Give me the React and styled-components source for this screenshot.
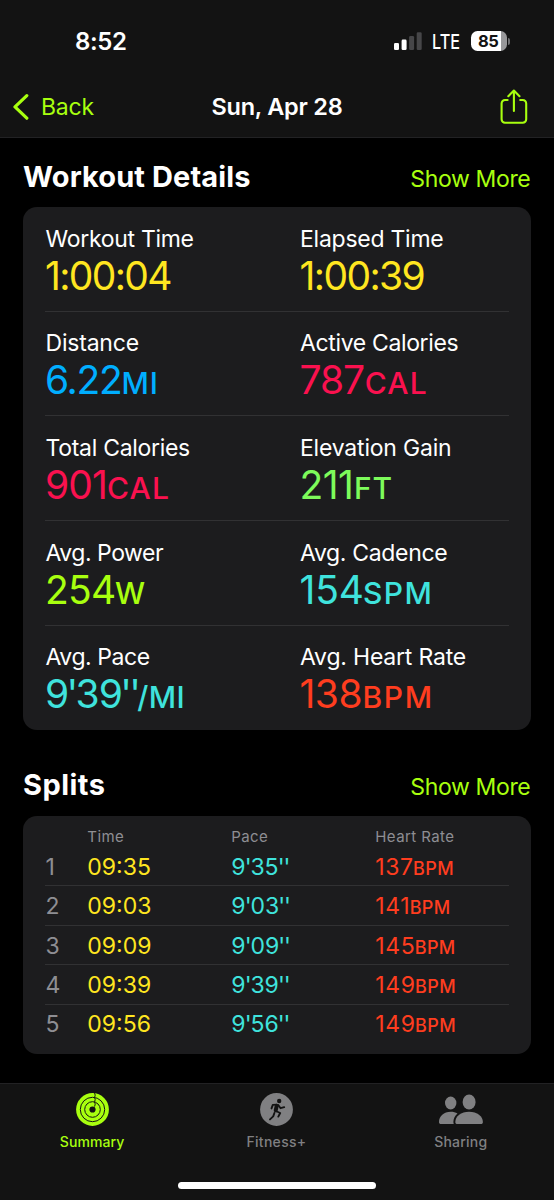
import React from 'react';
import styled, { createGlobalStyle } from 'styled-components';

const GlobalStyle = createGlobalStyle`
  * {
    box-sizing: border-box;
  }
  body {
    margin: 0;
    background-color: #000;
    font-family: Inter, 'Liberation Sans', sans-serif;
    color: #fff;
  }
`;

const lime = '#a8ff0f';
const yellow = '#ffe620';
const blue = '#00aeff';
const pink = '#fa114f';
const green = '#7dfb5b';
const cyan = '#3fe3dd';
const red = '#ff3d1f';

const PageWrapper = styled.div`
  display: flex;
  flex-direction: column;
  width: 554px;
  height: 1200px;
  overflow: hidden;
  background-color: #000;
`;

const Header = styled.header`
  height: 138px;
  background-color: #131313;
  border-bottom: 1px solid #222224;
`;

const StatusBar = styled.div`
  display: flex;
  align-items: center;
  justify-content: space-between;
  height: 82px;
  padding: 0 44px 0 75px;
`;

const Clock = styled.span`
  font-size: 24px;
  font-weight: 600;
  letter-spacing: -0.4px;
`;

const StatusIcons = styled.div`
  display: flex;
  align-items: center;
`;

const Network = styled.span`
  width: 30px;
  margin: 2px 0 0 9.7px;
  font-size: 20px;
  font-weight: 500;
  line-height: 20px;
  transform: scaleX(0.81);
  transform-origin: left center;
`;

const Battery = styled.div`
  display: flex;
  align-items: center;
  gap: 1px;
  margin-left: 9.3px;
`;

const BatteryBody = styled.div`
  width: 36px;
  height: 20px;
  padding-left: 7px;
  border-radius: 6.5px;
  background: linear-gradient(to right, #fff 30px, #98989a 30px);
  color: #131313;
  font-size: 16.5px;
  font-weight: 700;
  line-height: 21px;
  letter-spacing: -0.4px;
`;

const BatteryCap = styled.div`
  width: 2px;
  height: 7px;
  border-radius: 0 3px 3px 0;
  background-color: #707072;
`;

const NavBar = styled.nav`
  display: grid;
  grid-template-columns: 1fr auto 1fr;
  align-items: center;
  height: 50px;
  padding: 0 26px 0 13px;
`;

const BackButton = styled.button`
  display: flex;
  align-items: center;
  gap: 12px;
  padding: 0;
  border: 0;
  background: none;
  color: ${lime};
  font: 400 23px/30px Inter, sans-serif;
  letter-spacing: -0.2px;
`;

const NavTitle = styled.h1`
  margin: 0 0 0 13px;
  font-size: 23.5px;
  font-weight: 600;
  line-height: 30px;
  letter-spacing: -0.25px;
`;

const ShareButton = styled.button`
  display: flex;
  justify-self: end;
  padding: 0 0 1px;
  border: 0;
  background: none;
`;

const Content = styled.main`
  display: flex;
  flex-direction: column;
  flex: 1;
  padding: 0 23px;
`;

const SectionHeader = styled.div`
  display: flex;
  justify-content: space-between;
  height: ${(props) => props.$height}px;
  padding-top: ${(props) => props.$top}px;
`;

const SectionTitle = styled.h2`
  margin: 0;
  font-size: 29px;
  font-weight: 700;
  line-height: 36px;
  letter-spacing: ${(props) => props.$track}px;
`;

const ShowMore = styled.a`
  margin: 2.3px 0.6px 0 0;
  color: ${lime};
  font-size: 23px;
  line-height: 36px;
  letter-spacing: -0.35px;
`;

const Card = styled.section`
  border-radius: 14px;
  background-color: #1c1c1e;
`;

const MetricsCard = styled(Card)`
  display: grid;
  grid-template-rows: repeat(5, 1fr);
  height: 523px;
  padding: 0 22px;
`;

const MetricRow = styled.div`
  display: grid;
  grid-template-columns: 254.5px 1fr;
  padding-top: 16.6px;
  border-bottom: 1px solid #313133;

  &:last-child {
    border-bottom-color: transparent;
  }
`;

const MetricLabel = styled.div`
  padding-left: 0.5px;
  font-size: 23px;
  line-height: 30px;
  letter-spacing: ${(props) => props.$track}px;
  white-space: nowrap;
`;

const MetricValue = styled.div`
  color: ${(props) => props.$color};
  font-size: 39px;
  line-height: 43.8px;
  letter-spacing: ${(props) => props.$track}px;
  white-space: nowrap;
`;

const Unit = styled.span`
  margin-left: ${(props) => props.$shift || 0}px;
  font-size: 30px;
  font-weight: 500;
  line-height: 1;
  letter-spacing: ${(props) => props.$track}px;
`;

/* minute and second marks sit closer to the digits than the font sets them */
const Tick = styled.span`
  margin-left: -0.046em;
  letter-spacing: -0.07em;
`;

const SplitsCard = styled(Card)`
  height: 238.6px;
  padding: 5.8px 22px 0;
`;

const SplitRow = styled.div`
  display: grid;
  grid-template-columns: 42.3px 144px 144px 1fr;
  align-items: center;
  height: 39.4px;
  padding-top: 1.2px;
  border-bottom: 1px solid #313133;
  font-size: 23px;
  line-height: 30px;

  &:last-child {
    border-bottom-color: transparent;
  }
`;

const SplitHead = styled(SplitRow)`
  height: 25.6px;
  padding-top: 5.2px;
  border-bottom: 0;
  color: #8e8e93;
  font-size: 15px;
  line-height: 20px;
  letter-spacing: 0.4px;
`;

const SplitIndex = styled.span`
  padding-left: 0.5px;
  color: #8e8e93;
`;

const SplitCell = styled.span`
  color: ${(props) => props.$color};
  letter-spacing: ${(props) => props.$track || 0}px;
`;

const SplitTick = styled(Tick)`
  margin-left: -0.04em;
  letter-spacing: -0.05em;
`;

const SplitUnit = styled.span`
  margin-left: -0.6px;
  font-size: 18px;
  font-weight: 500;
  line-height: 1;
  letter-spacing: 0.4px;
`;

const TabBar = styled.footer`
  height: 117.5px;
  background-color: #131313;
  border-top: 1px solid #222224;
`;

const Tabs = styled.div`
  display: grid;
  grid-template-columns: repeat(3, 184.3px);
  height: 98px;
`;

const Tab = styled.div`
  display: flex;
  flex-direction: column;
  align-items: center;
  padding-top: 9px;
  color: ${(props) => (props.$active ? lime : '#808082')};
  font-size: 14px;
  font-weight: 500;
  line-height: 20px;
  letter-spacing: ${(props) => props.$track}px;

  svg {
    display: block;
    margin-bottom: 6px;
  }
`;

const HomeIndicator = styled.div`
  width: 198px;
  height: 7px;
  margin: 0 auto;
  border-radius: 4px;
  background-color: #fff;
`;

const metrics = [
  [
    { label: 'Workout Time', labelTrack: -0.3, value: '1:00:04', track: -1.65, color: yellow },
    { label: 'Elapsed Time', labelTrack: -0.25, value: '1:00:39', track: -1.6, color: yellow },
  ],
  [
    { label: 'Distance', labelTrack: -0.2, value: '6.22', track: -1.3, unit: 'MI', unitTrack: 0.9, color: blue },
    { label: 'Active Calories', labelTrack: -0.36, value: '787', track: -1.1, unit: 'CAL', unitTrack: 1.2, shift: 0.9, color: pink },
  ],
  [
    { label: 'Total Calories', labelTrack: -0.3, value: '901', track: -0.9, unit: 'CAL', unitTrack: 1.2, color: pink },
    { label: 'Elevation Gain', labelTrack: -0.2, value: '211', track: -0.6, unit: 'FT', unitTrack: 0.7, shift: 0.8, color: green },
  ],
  [
    { label: 'Avg. Power', labelTrack: -0.48, value: '254', track: -0.7, unit: 'W', unitTrack: 0, shift: -0.5, color: lime },
    { label: 'Avg. Cadence', labelTrack: -0.34, value: '154', track: -0.1, unit: 'SPM', unitTrack: 1.5, shift: -1, color: cyan },
  ],
  [
    { label: 'Avg. Pace', labelTrack: -0.45, value: "9'39''", track: -0.9, unit: '/MI', unitTrack: 0.5, shift: -1, color: cyan },
    { label: 'Avg. Heart Rate', labelTrack: -0.2, value: '138', track: -0.5, unit: 'BPM', unitTrack: 1.6, shift: 0.4, color: red },
  ],
];

const splits = [
  { time: '09:35', pace: "9'35''", heart: '137' },
  { time: '09:03', pace: "9'03''", heart: '141' },
  { time: '09:09', pace: "9'09''", heart: '145' },
  { time: '09:39', pace: "9'39''", heart: '149' },
  { time: '09:56', pace: "9'56''", heart: '149' },
];

const withTicks = (text, Mark) =>
  text.split(/('+)/).map((part, i) => (part.startsWith("'") ? <Mark key={i}>{part}</Mark> : part));

const SignalIcon = () => (
  <svg width="28" height="18" viewBox="0 0 28 18">
    <rect x="0" y="11" width="5" height="7" rx="1.3" fill="#fff" />
    <rect x="7.6" y="7.6" width="5" height="10.4" rx="1.3" fill="#fff" />
    <rect x="15.1" y="4" width="5" height="14" rx="1.3" fill="#464648" />
    <rect x="22.7" y="0.3" width="5" height="17.7" rx="1.3" fill="#464648" />
  </svg>
);

const ChevronIcon = () => (
  <svg width="16" height="28" viewBox="0 0 16 28" fill="none" stroke={lime} strokeWidth="3.2" strokeLinecap="round" strokeLinejoin="round">
    <path d="M13.8 2.6 2 13.9l11.8 11.3" />
  </svg>
);

const ShareIcon = () => (
  <svg width="28" height="36" viewBox="0 0 28 36" fill="none" stroke={lime} strokeWidth="2.1" strokeLinecap="round" strokeLinejoin="round">
    <path d="M7.6 11H5a3.4 3.4 0 0 0-3.4 3.4v15.9A3.4 3.4 0 0 0 5 33.7h17.8a3.4 3.4 0 0 0 3.4-3.4V14.4a3.4 3.4 0 0 0-3.4-3.4h-2.6" />
    <path d="M13.9 22V1.8M8.3 7.2l5.6-5.6 5.6 5.6" />
  </svg>
);

const RingsIcon = () => (
  <svg width="33" height="33" viewBox="0 0 33 33">
    <circle cx="16.5" cy="16.5" r="16.4" fill={lime} />
    <g fill="none" stroke="#131313" strokeWidth="1">
      <circle cx="16.5" cy="16.5" r="12.2" />
      <circle cx="16.5" cy="16.5" r="7.8" />
      <path d="M18.6 0q1.2 2.2 0 4.4M18.6 4.4q1.2 2.2 0 4.4M18.6 8.8q1.2 2.2 0 4.8" />
    </g>
    <circle cx="16.5" cy="16.5" r="3.1" fill="#131313" />
  </svg>
);

const RunnerIcon = () => (
  <svg width="33" height="33" viewBox="0 0 33 33">
    <circle cx="16.5" cy="16.5" r="16.4" fill="#808082" />
    <circle cx="19.2" cy="8" r="2.2" fill="#131313" />
    <g fill="none" stroke="#131313" strokeWidth="1.9" strokeLinecap="round" strokeLinejoin="round">
      <path d="M16.7 11.6 12.8 11.9 11.5 15.4" />
      <path d="M18.2 12 20.6 15.2 24.2 14.2" />
      <path d="M16.7 12.9 15.7 17.4" strokeWidth="4" />
      <path d="M15.8 18 20.2 20 18.3 23.6" />
      <path d="M14.4 20 13.2 23.4 10 26.4" />
    </g>
  </svg>
);

const PeopleIcon = () => (
  <svg width="44" height="33" viewBox="0 0 44 33" fill="#808082">
    <ellipse cx="11.7" cy="10" rx="5.7" ry="6.4" />
    <ellipse cx="30.1" cy="9" rx="6.5" ry="7.4" />
    <path d="M30.1 18.7c-8 0-13.8 4.7-13.8 10.2 0 1.4.7 2.1 2.2 2.1h23.2c1.5 0 2.2-.7 2.2-2.1 0-5.5-5.8-10.2-13.8-10.2z" />
    <path d="M11.7 18.7c2.6 0 4.9.6 6.8 1.7-2.5 2-4.1 5-4.1 8.4 0 .8.1 1.6.4 2.2H2.1C.7 31 0 30.3 0 28.9c0-5.5 4.9-10.2 11.7-10.2z" />
  </svg>
);

const Metric = ({ item }) => (
  <div>
    <MetricLabel $track={item.labelTrack}>{item.label}</MetricLabel>
    <MetricValue $color={item.color} $track={item.track}>
      {withTicks(item.value, Tick)}
      {item.unit && (
        <Unit $track={item.unitTrack} $shift={item.shift}>
          {item.unit}
        </Unit>
      )}
    </MetricValue>
  </div>
);

const App = () => (
  <PageWrapper>
    <GlobalStyle />
    <Header>
      <StatusBar>
        <Clock>8:52</Clock>
        <StatusIcons>
          <SignalIcon />
          <Network>LTE</Network>
          <Battery>
            <BatteryBody>85</BatteryBody>
            <BatteryCap />
          </Battery>
        </StatusIcons>
      </StatusBar>
      <NavBar>
        <BackButton>
          <ChevronIcon />
          Back
        </BackButton>
        <NavTitle>Sun, Apr 28</NavTitle>
        <ShareButton aria-label="Share">
          <ShareIcon />
        </ShareButton>
      </NavBar>
    </Header>
    <Content>
      <SectionHeader $height={69.3} $top={20.8}>
        <SectionTitle $track={0.1}>Workout Details</SectionTitle>
        <ShowMore>Show More</ShowMore>
      </SectionHeader>
      <MetricsCard>
        {metrics.map((row) => (
          <MetricRow key={row[0].label}>
            {row.map((item) => (
              <Metric key={item.label} item={item} />
            ))}
          </MetricRow>
        ))}
      </MetricsCard>
      <SectionHeader $height={85.4} $top={36.8}>
        <SectionTitle $track={0.45}>Splits</SectionTitle>
        <ShowMore>Show More</ShowMore>
      </SectionHeader>
      <SplitsCard>
        <SplitHead>
          <span />
          <span>Time</span>
          <span>Pace</span>
          <span>Heart Rate</span>
        </SplitHead>
        {splits.map((split, i) => (
          <SplitRow key={i}>
            <SplitIndex>{i + 1}</SplitIndex>
            <SplitCell $color={yellow}>{split.time}</SplitCell>
            <SplitCell $color={cyan}>{withTicks(split.pace, SplitTick)}</SplitCell>
            <SplitCell $color={red} $track={0.6}>
              {split.heart}
              <SplitUnit>BPM</SplitUnit>
            </SplitCell>
          </SplitRow>
        ))}
      </SplitsCard>
    </Content>
    <TabBar>
      <Tabs>
        <Tab $active $track={0.1}>
          <RingsIcon />
          Summary
        </Tab>
        <Tab $track={0.3}>
          <RunnerIcon />
          Fitness+
        </Tab>
        <Tab $track={0.2}>
          <PeopleIcon />
          Sharing
        </Tab>
      </Tabs>
      <HomeIndicator />
    </TabBar>
  </PageWrapper>
);

export default App;
